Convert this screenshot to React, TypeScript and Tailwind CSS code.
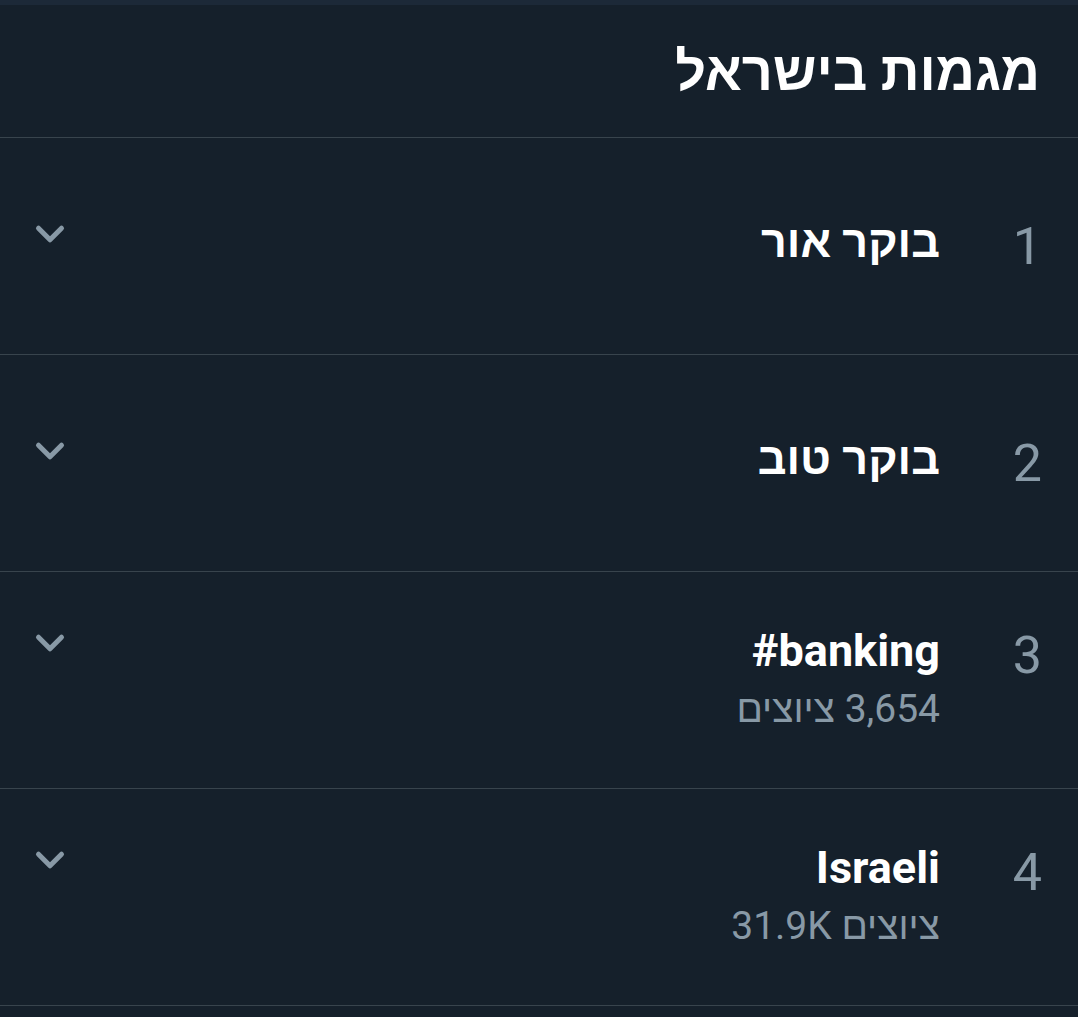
import { ChevronDown } from 'lucide-react'

type Trend = { rank: number; title: string; count?: string }

const trends: Trend[] = [
  { rank: 1, title: 'בוקר אור' },
  { rank: 2, title: 'בוקר טוב' },
  { rank: 3, title: '#banking', count: '3,654 ציוצים' },
  { rank: 4, title: 'Israeli', count: 'ציוצים 31.9K' },
]

function TrendRow({ trend }: { trend: Trend }) {
  return (
    <div className="flex h-[217px] items-center border-b border-[#38444d] pl-[27px] pr-[36px]">
      <div className="flex w-full items-start">
        <div className="w-[102px] shrink-0 pt-[2px] text-[52px] leading-[62px] text-[#8899a6]">{trend.rank}</div>
        <div className="flex-1">
          <div className="text-[45px] font-bold leading-[56px] text-white">
            <bdi>{trend.title}</bdi>
          </div>
          {trend.count && (
            <div className="mt-[2px] text-[39px] leading-[56px] text-[#8899a6]">{trend.count}</div>
          )}
        </div>
        <ChevronDown className="mt-[-3px] h-[46px] w-[46px] shrink-0 text-[#8899a6]" strokeWidth={2.6} />
      </div>
    </div>
  )
}

export default function App() {
  return (
    <div
      dir="rtl"
      className="min-h-screen w-[1078px] bg-[#15202b]"
      style={{ fontFamily: 'Roboto, "Liberation Sans", "DejaVu Sans", sans-serif' }}
    >
      <div className="h-[5px] bg-[#1c2938]" />
      <div className="flex h-[133px] items-center border-b border-[#38444d] pr-[38px] text-[54px] font-bold text-white">
        מגמות בישראל
      </div>
      {trends.map((t) => (
        <TrendRow key={t.rank} trend={t} />
      ))}
    </div>
  )
}
